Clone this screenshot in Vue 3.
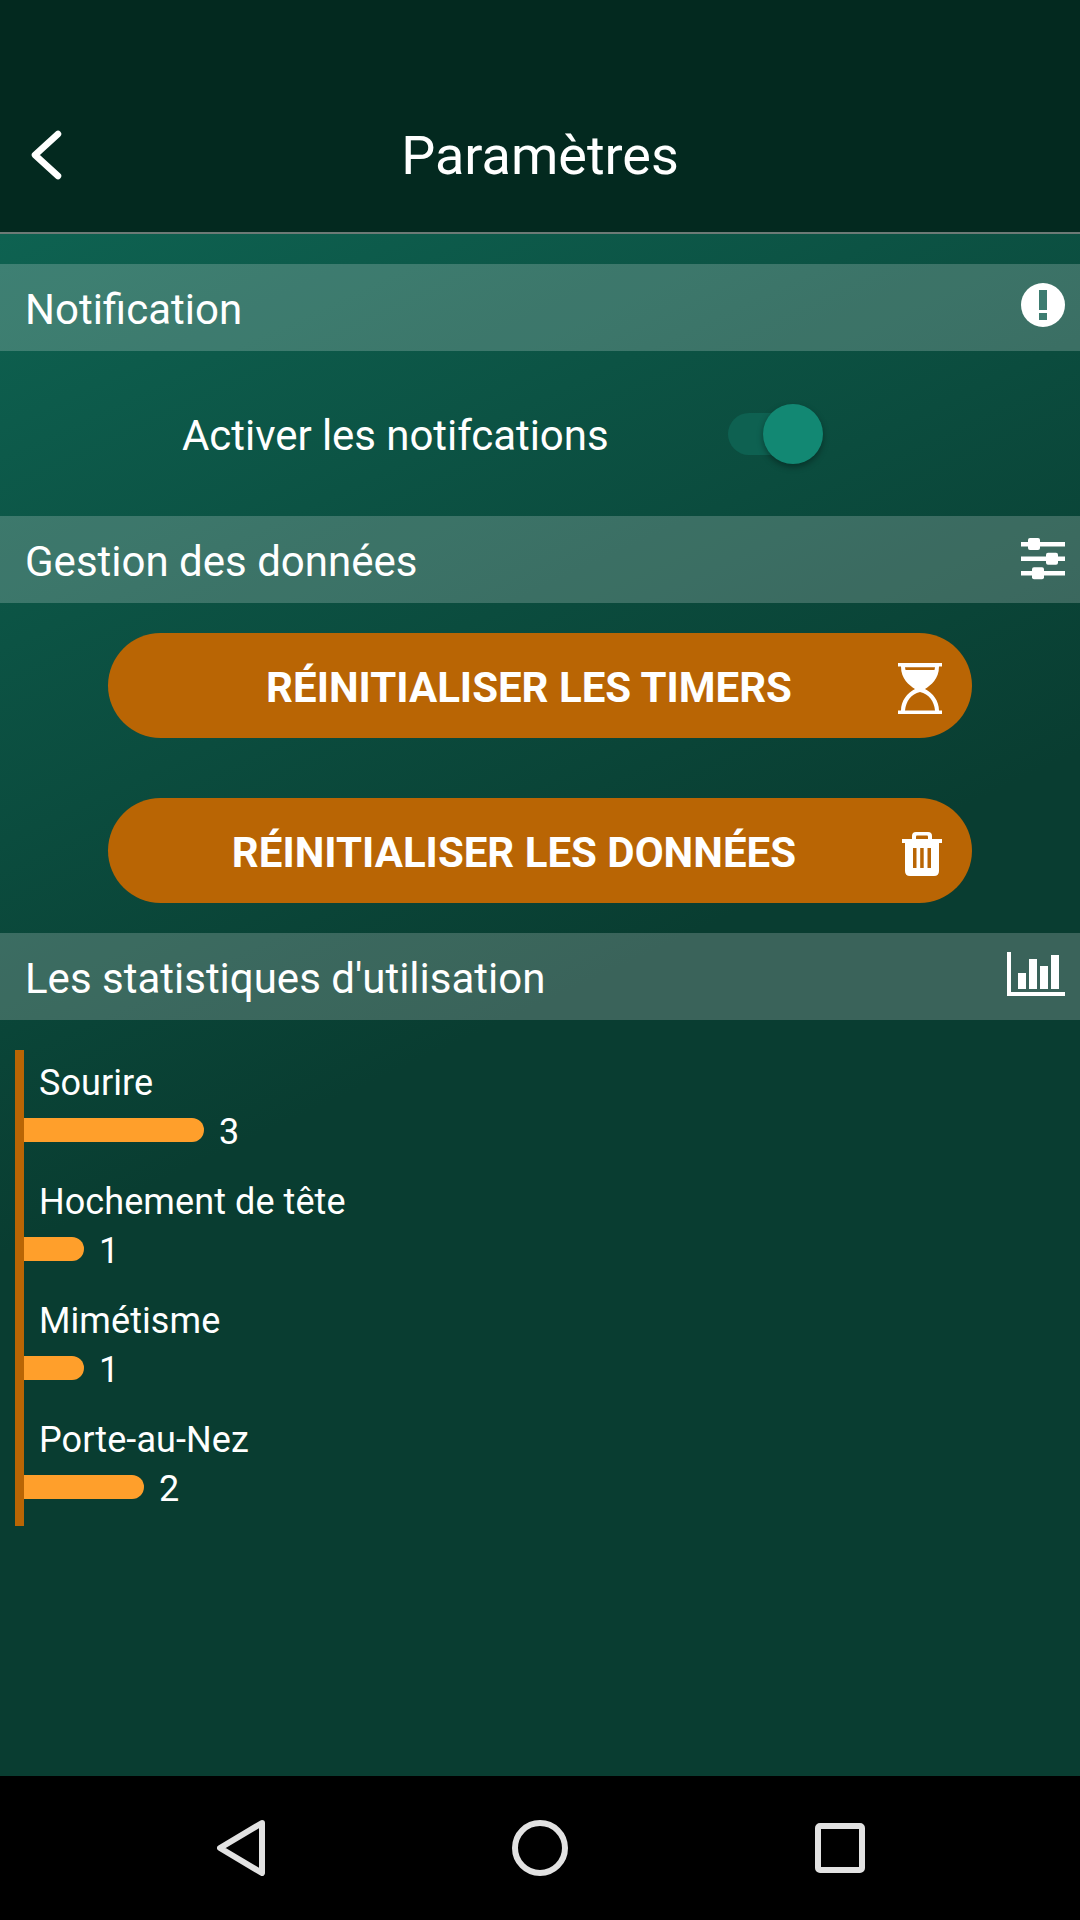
<script setup>
const stats = [
  { name: 'Sourire', value: 3 },
  { name: 'Hochement de tête', value: 1 },
  { name: 'Mimétisme', value: 1 },
  { name: 'Porte-au-Nez', value: 2 },
]
</script>

<template>
  <div class="screen">
    <header class="topbar">
      <svg class="back" width="36" height="52" viewBox="0 0 36 52">
        <path d="M29 5 L6 26 L29 47" fill="none" stroke="#fff" stroke-width="6.5" stroke-linecap="round" stroke-linejoin="round" />
      </svg>
      <h1>Paramètres</h1>
    </header>

    <main class="content">
      <div class="section-title">
        <span>Notification</span>
        <svg class="icon" width="44" height="44" viewBox="0 0 44 44">
          <circle cx="22" cy="22" r="22" fill="#fff" />
          <rect x="18" y="7" width="8" height="20" fill="#3d7c70" />
          <rect x="18" y="30" width="8" height="7" fill="#3d7c70" />
        </svg>
      </div>

      <div class="switch-row">
        <span class="switch-label">Activer les notifcations</span>
        <div class="switch">
          <div class="switch-track"></div>
          <div class="switch-knob"></div>
        </div>
      </div>

      <div class="section-title">
        <span>Gestion des données</span>
        <svg class="icon icon-sliders" width="44" height="42" viewBox="0 0 44 42">
          <g fill="#fff">
            <rect x="0" y="4" width="44" height="4.5" />
            <rect x="7" y="0" width="12" height="12" rx="2" />
            <rect x="0" y="18.5" width="44" height="4.5" />
            <rect x="25" y="14.7" width="12" height="12" rx="2" />
            <rect x="0" y="33" width="44" height="4.5" />
            <rect x="11" y="29.3" width="12" height="12" rx="2" />
          </g>
        </svg>
      </div>

      <div class="actions">
        <button class="action">
          <span>RÉINITIALISER LES TIMERS</span>
          <svg width="44" height="51" viewBox="0 0 44 51">
            <path fill="#fff" d="M0 0 H44 V3.5 H41 C41 16 33 22 27 26 C35 30 41 38 41 47.5 H44 V51 H0 V47.5 H3 C3 38 9 30 17 26 C11 22 3 16 3 3.5 H0 Z" />
            <path fill="#b96504" d="M7 4.3 H37 L36.5 7 H7.5 Z" />
            <path fill="#b96504" d="M22 29 C13 31 8 38 7 47.5 H37 C36 38 31 31 22 29 Z" />
          </svg>
        </button>
        <button class="action">
          <span>RÉINITIALISER LES DONNÉES</span>
          <svg width="40" height="44" viewBox="0 0 40 44">
            <path fill="#fff" d="M0 7 H10 V4 Q10 0 14 0 H26 Q30 0 30 4 V7 H40 V11 H37 V39 Q37 44 32 44 H8 Q3 44 3 39 V11 H0 Z" />
            <path fill="#b96504" d="M14 7 V4.5 Q14 3.5 15 3.5 H25 Q26 3.5 26 4.5 V7 Z" />
            <g fill="#b96504">
              <rect x="11" y="16" width="3.5" height="20" />
              <rect x="18.2" y="16" width="3.5" height="20" />
              <rect x="25.5" y="16" width="3.5" height="20" />
            </g>
          </svg>
        </button>
      </div>

      <div class="section-title">
        <span>Les statistiques d'utilisation</span>
        <svg class="icon" width="58" height="44" viewBox="0 0 58 44">
          <g fill="#fff">
            <rect x="0" y="0" width="4" height="44" />
            <rect x="0" y="40" width="58" height="4" />
            <rect x="11" y="21" width="8" height="16" />
            <rect x="22" y="7" width="8" height="30" />
            <rect x="33" y="14" width="8" height="23" />
            <rect x="44" y="3" width="8" height="34" />
          </g>
        </svg>
      </div>

      <div class="chart">
        <div v-for="stat in stats" :key="stat.name" class="chart-row">
          <div class="chart-name">{{ stat.name }}</div>
          <div class="chart-line">
            <div class="bar" :style="{ width: stat.value * 60 + 'px' }"></div>
            <span class="chart-value">{{ stat.value }}</span>
          </div>
        </div>
      </div>
    </main>

    <footer class="navbar">
      <svg width="48" height="56" viewBox="0 0 48 56">
        <path d="M45 3 L3 28 L45 53 Z" fill="none" stroke="#e2e2e2" stroke-width="6" stroke-linejoin="round" />
      </svg>
      <svg width="56" height="56" viewBox="0 0 56 56">
        <circle cx="28" cy="28" r="25" fill="none" stroke="#e2e2e2" stroke-width="6" />
      </svg>
      <svg width="50" height="50" viewBox="0 0 50 50">
        <rect x="3" y="3" width="44" height="44" rx="2" fill="none" stroke="#e2e2e2" stroke-width="6" />
      </svg>
    </footer>
  </div>
</template>

<style>
html, body {
  margin: 0;
  background: #000;
}
</style>

<style scoped>
.screen {
  width: 1080px;
  height: 1920px;
  display: flex;
  flex-direction: column;
  font-family: Roboto, "Noto Sans", sans-serif;
  color: #fff;
  overflow: hidden;
}

.topbar {
  position: relative;
  height: 154px;
  flex-shrink: 0;
  background: #03291f;
  border-bottom: 2px solid #6d7a76;
  display: flex;
  align-items: center;
  justify-content: center;
  padding-top: 78px;
}
.topbar h1 {
  margin: 0;
  font-size: 54px;
  font-weight: 400;
}
.back {
  position: absolute;
  left: 29px;
  top: 129px;
}

.content {
  flex: 1;
  background: linear-gradient(155deg, #0e6251 0%, #093d31 50%, #093d31 100%);
  padding-top: 30px;
}

.section-title {
  height: 87px;
  box-sizing: border-box;
  background: rgba(255, 255, 255, 0.2);
  display: flex;
  align-items: center;
  justify-content: space-between;
  padding: 0 15px 0 25px;
  font-size: 42px;
}
.section-title span {
  padding-top: 3px;
}
.icon {
  margin-bottom: 6px;
}
.icon-sliders {
  margin-bottom: 2px;
}

.switch-row {
  height: 165px;
  display: flex;
  align-items: center;
  padding-left: 182px;
  font-size: 42px;
}
.switch-label {
  width: 546px;
  padding-top: 4px;
  letter-spacing: -0.05px;
}
.switch {
  position: relative;
  width: 95px;
  height: 60px;
}
.switch-track {
  position: absolute;
  left: 0;
  top: 9px;
  width: 85px;
  height: 42px;
  border-radius: 21px;
  background: #0e6151;
}
.switch-knob {
  position: absolute;
  right: 0;
  top: 0;
  width: 60px;
  height: 60px;
  border-radius: 50%;
  background: #128873;
  box-shadow: 0 3px 6px rgba(0, 0, 0, 0.35);
}

.actions {
  display: flex;
  flex-direction: column;
  gap: 60px;
  padding: 30px 108px;
}
.action {
  height: 105px;
  border: none;
  border-radius: 53px;
  background: #b96504;
  color: #fff;
  font-family: inherit;
  font-size: 42px;
  font-weight: 700;
  display: flex;
  align-items: center;
  justify-content: flex-end;
  gap: 106px;
  padding: 0 30px 0 0;
}
.action span {
  padding-top: 3px;
}
.action svg {
  margin-top: 6px;
}

.chart {
  margin: 30px 0 0 15px;
  border-left: 9px solid #b96504;
  height: 476px;
  width: 600px;
}
.chart-row {
  height: 119px;
}
.chart-name {
  padding: 12px 0 0 15px;
  font-size: 36px;
  line-height: 42px;
  letter-spacing: 0.08px;
}
.chart-line {
  display: flex;
  align-items: center;
  gap: 15px;
  height: 42px;
  margin-top: 5px;
}
.bar {
  height: 24px;
  background: #ff9f2b;
  border-radius: 0 12px 12px 0;
}
.chart-value {
  font-size: 36px;
  padding-top: 3px;
}

.navbar {
  height: 144px;
  flex-shrink: 0;
  background: #000;
  position: relative;
}
.navbar svg {
  position: absolute;
  top: 44px;
}
.navbar svg:nth-child(1) { left: 217px; }
.navbar svg:nth-child(2) { left: 512px; }
.navbar svg:nth-child(3) { left: 815px; top: 47px; }
</style>
